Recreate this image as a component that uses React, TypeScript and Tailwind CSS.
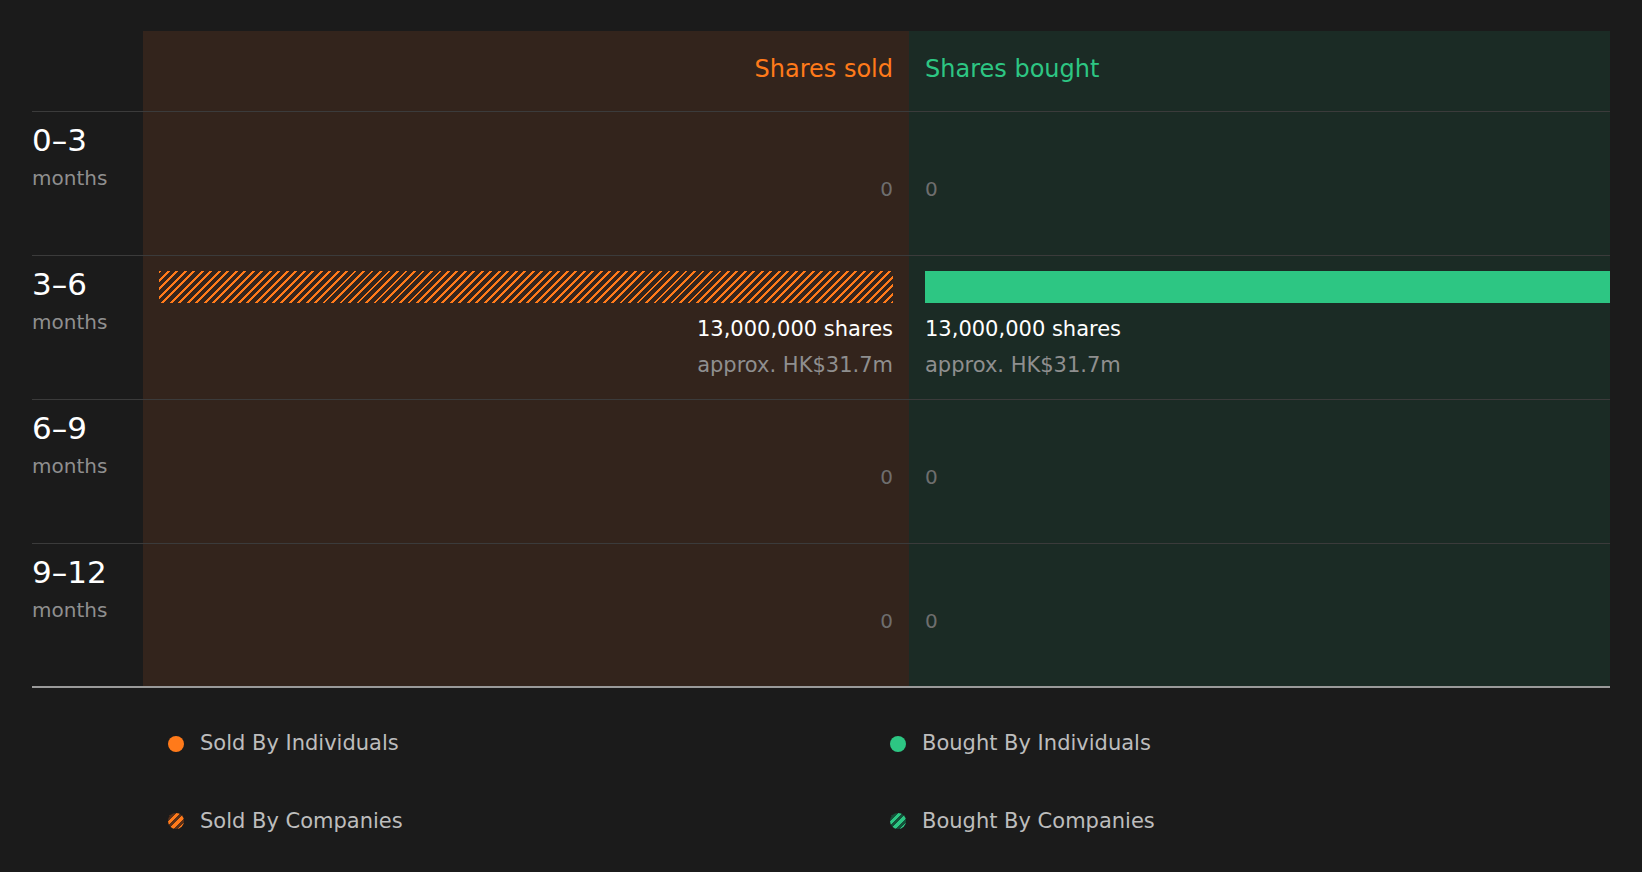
import React from "react";

const rows = [
  { label: "0–3", sold: null, bought: null },
  { label: "3–6", sold: "13,000,000 shares", bought: "13,000,000 shares", value: "approx. HK$31.7m" },
  { label: "6–9", sold: null, bought: null },
  { label: "9–12", sold: null, bought: null },
];

const hatch = "repeating-linear-gradient(135deg, #ff7a1a 0 2px, transparent 2px 6px)";

const App = () => {
  return (
    <div className="w-[1642px] h-[872px] bg-[#1b1b1b] px-[32px] pt-[31px] text-white" style={{ fontFamily: '"DejaVu Sans", sans-serif' }}>
      {/* header */}
      <div className="flex h-[81px] border-b border-[#3b3b3b]">
        <div className="w-[111px]" />
        <div className="w-[766px] bg-[#33241c] flex items-center justify-end pr-[16px] pb-[4px] text-[24px] text-[#ff7a1a]">Shares sold</div>
        <div className="flex-1 bg-[#1b2b25] flex items-center pl-[16px] pb-[4px] text-[24px] text-[#2dc683]">Shares bought</div>
      </div>
      {rows.map((r, i) => (
        <div key={i} className={`flex h-[144px] ${i < 3 ? "border-b border-[#3b3b3b]" : "border-b-2 border-[#9a9a9a]"}`}>
          <div className="w-[111px] pt-[8px]">
            <div className="text-[31px] leading-[40px]">{r.label}</div>
            <div className="text-[20px] text-[#8f8f8f] mt-[3px]">months</div>
          </div>
          <div className="w-[766px] bg-[#33241c] px-[16px] flex flex-col items-end">
            {r.sold ? (
              <>
                <div className="w-full h-[32px] mt-[15px]" style={{ backgroundImage: hatch }} />
                <div className="text-[21px] mt-[12px] leading-[28px]">{r.sold}</div>
                <div className="text-[21px] mt-[8px] leading-[28px] text-[#8f8f8f]">{r.value}</div>
              </>
            ) : (
              <div className="text-[20px] text-[#6e6e6e] mt-[62px]">0</div>
            )}
          </div>
          <div className="flex-1 bg-[#1b2b25] pl-[16px] flex flex-col items-start">
            {r.bought ? (
              <>
                <div className="w-full h-[32px] mt-[15px] bg-[#2dc683]" />
                <div className="text-[21px] mt-[12px] leading-[28px]">{r.bought}</div>
                <div className="text-[21px] mt-[8px] leading-[28px] text-[#8f8f8f]">{r.value}</div>
              </>
            ) : (
              <div className="text-[20px] text-[#6e6e6e] mt-[62px]">0</div>
            )}
          </div>
        </div>
      ))}
      {/* legend */}
      <div className="grid grid-cols-2 pl-[136px] pt-[40px] gap-y-[46px] text-[21px] text-[#bdbdbd]">
        <div className="flex items-center gap-[16px]">
          <span className="w-[16px] h-[16px] rounded-full bg-[#ff7a1a]" />Sold By Individuals
        </div>
        <div className="flex items-center gap-[16px] pl-[1px]">
          <span className="w-[16px] h-[16px] rounded-full bg-[#2dc683]" />Bought By Individuals
        </div>
        <div className="flex items-center gap-[16px]">
          <span className="w-[16px] h-[16px] rounded-full bg-[#5a3018]" style={{ backgroundImage: "repeating-linear-gradient(135deg, #ff7a1a 0 3px, transparent 3px 6px)" }} />Sold By Companies
        </div>
        <div className="flex items-center gap-[16px] pl-[1px]">
          <span className="w-[16px] h-[16px] rounded-full bg-[#14523a]" style={{ backgroundImage: "repeating-linear-gradient(135deg, #2dc683 0 3px, transparent 3px 6px)" }} />Bought By Companies
        </div>
      </div>
    </div>
  );
};

export default App;
